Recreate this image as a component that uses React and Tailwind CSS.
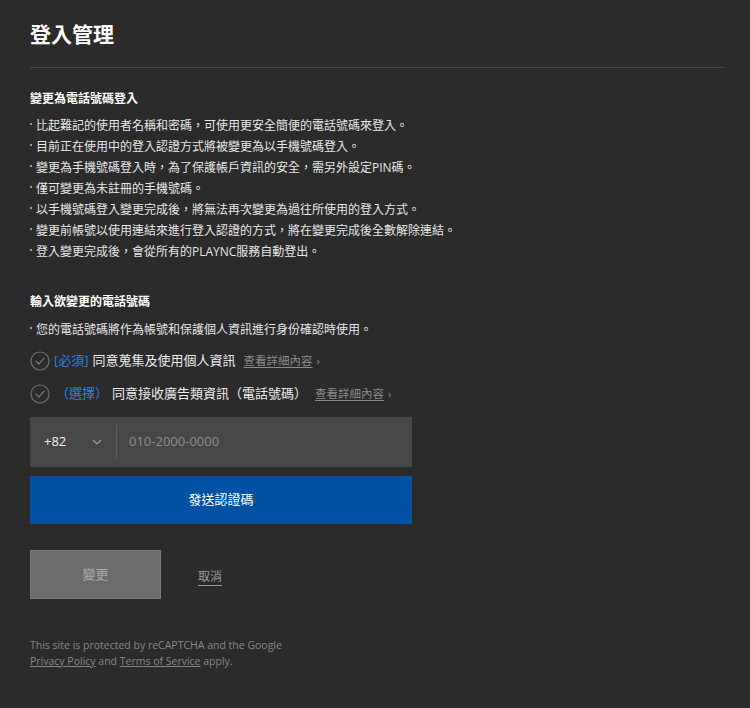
import React from "react";

const FONT = { fontFamily: '"Open Sans", "Noto Sans CJK TC", "Noto Sans", sans-serif' };

function CheckCircle() {
  return (
    <svg width="20" height="20" viewBox="0 0 20 20" className="shrink-0">
      <circle cx="10" cy="10" r="9" fill="none" stroke="#6f6f6f" strokeWidth="1.2" />
      <path d="M6 10.2 L8.8 13 L14 7.4" fill="none" stroke="#7a7a7a" strokeWidth="1.2" strokeLinecap="round" strokeLinejoin="round" />
    </svg>
  );
}

function Bullet({ children }) {
  return (
    <li className="flex items-start leading-[21px]">
      <span className="mt-[8px] mr-[4px] h-[2px] w-[2px] shrink-0 bg-[#9a9a9a]" />
      <span>{children}</span>
    </li>
  );
}

export default function App() {
  const bullets = [
    "比起難記的使用者名稱和密碼，可使用更安全簡便的電話號碼來登入。",
    "目前正在使用中的登入認證方式將被變更為以手機號碼登入。",
    "變更為手機號碼登入時，為了保護帳戶資訊的安全，需另外設定PIN碼。",
    "僅可變更為未註冊的手機號碼。",
    "以手機號碼登入變更完成後，將無法再次變更為過往所使用的登入方式。",
    "變更前帳號以使用連結來進行登入認證的方式，將在變更完成後全數解除連結。",
    "登入變更完成後，會從所有的PLAYNC服務自動登出。",
  ];
  return (
    <div className="min-h-[708px] bg-[#2b2b2b] pl-[30px] pr-[26px] pt-[20px]" style={FONT}>
      <h1 className="text-[21px] font-bold leading-[28px] text-white">登入管理</h1>
      <div className="mt-[19px] h-px bg-[#474747]" />

      <h2 className="mt-[22px] text-[12px] font-bold leading-[18px] text-white">變更為電話號碼登入</h2>
      <ul className="mt-[7px] text-[12px] text-[#e6e6e6]">
        {bullets.map((b) => (
          <Bullet key={b}>{b}</Bullet>
        ))}
      </ul>

      <h2 className="mt-[31px] text-[12px] font-bold leading-[18px] text-white">輸入欲變更的電話號碼</h2>
      <ul className="mt-[8px] text-[12px] text-[#e6e6e6]">
        <Bullet>您的電話號碼將作為帳號和保護個人資訊進行身份確認時使用。</Bullet>
      </ul>

      <div className="mt-[9px] flex h-[24px] items-center">
        <CheckCircle />
        <span className="ml-[4px] text-[13px] text-[#2f7fe0]">[必須]</span>
        <span className="ml-[4px] text-[13px] text-[#ececec]">同意蒐集及使用個人資訊</span>
        <span className="ml-[8px] text-[11.5px] text-[#8a8a8a] underline underline-offset-2">查看詳細內容</span>
        <span className="ml-[4px] text-[11px] text-[#8a8a8a]">›</span>
      </div>
      <div className="mt-[9px] flex h-[24px] items-center">
        <CheckCircle />
        <span className="ml-[6px] text-[13px] text-[#2f7fe0]">（選擇）</span>
        <span className="ml-[4px] text-[13px] text-[#ececec]">同意接收廣告類資訊（電話號碼）</span>
        <span className="ml-[8px] text-[11.5px] text-[#8a8a8a] underline underline-offset-2">查看詳細內容</span>
        <span className="ml-[4px] text-[11px] text-[#8a8a8a]">›</span>
      </div>

      <div className="mt-[11px] flex h-[50px] w-[382px] items-center bg-[#474747]">
        <div className="flex w-[86px] items-center justify-between pl-[14px] pr-[14px]">
          <span className="text-[13px] text-[#f0f0f0]">+82</span>
          <svg width="10" height="6" viewBox="0 0 10 6">
            <path d="M1 1 L5 5 L9 1" fill="none" stroke="#9a9a9a" strokeWidth="1.1" />
          </svg>
        </div>
        <div className="h-[34px] w-px bg-[#5e5e5e]" />
        <span className="ml-[12px] text-[13px] text-[#8c8c8c]">010-2000-0000</span>
      </div>

      <button className="mt-[9px] flex h-[48px] w-[382px] items-center justify-center bg-[#0152a2] text-[13px] text-white">
        發送認證碼
      </button>

      <div className="mt-[26px] flex items-center">
        <button className="flex h-[49px] w-[131px] items-center justify-center border border-[#7a7a7a] bg-[#6b6b6b] text-[13px] text-[#a9a9a9]">
          變更
        </button>
        <span className="ml-[37px] mt-[4px] text-[12px] text-[#9a9a9a] underline underline-offset-4">取消</span>
      </div>

      <div className="mt-[38px] text-[10.5px] leading-[16px] text-[#858585]">
        <p>This site is protected by reCAPTCHA and the Google</p>
        <p>
          <span className="underline">Privacy Policy</span> and <span className="underline">Terms of Service</span> apply.
        </p>
      </div>
    </div>
  );
}
